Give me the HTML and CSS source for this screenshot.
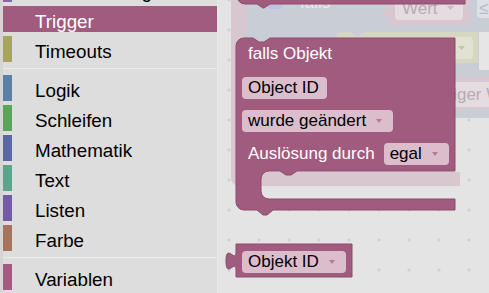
FILE: index.html
```html
<!DOCTYPE html>
<html lang="de">
<head>
    <meta charset="UTF-8">
    <meta name="viewport" content="width=device-width, initial-scale=1.0">
    <title>Skript-Editor</title>
    <link rel="stylesheet" href="styles.css">
</head>
<body>
    <div class="editor">
        <div class="toolbox">
            <div class="category-list">
                <div class="category"><span class="category-color color-convert"></span><span class="category-label">Konvertierung</span></div>
                <div class="category selected"><span class="category-color color-trigger"></span><span class="category-label">Trigger</span></div>
                <div class="category"><span class="category-color color-timeouts"></span><span class="category-label">Timeouts</span></div>
                <div class="separator"></div>
                <div class="category"><span class="category-color color-logic"></span><span class="category-label">Logik</span></div>
                <div class="category"><span class="category-color color-loops"></span><span class="category-label">Schleifen</span></div>
                <div class="category"><span class="category-color color-math"></span><span class="category-label">Mathematik</span></div>
                <div class="category"><span class="category-color color-text"></span><span class="category-label">Text</span></div>
                <div class="category"><span class="category-color color-lists"></span><span class="category-label">Listen</span></div>
                <div class="category"><span class="category-color color-colour"></span><span class="category-label">Farbe</span></div>
                <div class="separator"></div>
                <div class="category"><span class="category-color color-variables"></span><span class="category-label">Variablen</span></div>
                <div class="category"><span class="category-color color-functions"></span></div>
            </div>
        </div>

        <div class="workspace">
            <!-- blocks behind the dragged ones, drawn faded -->
            <svg class="faded-blocks" width="271" height="293" viewBox="218 0 271 293">
                <path class="faded-trigger" d="M231,-10 H262 V172 H460 V186 H239 A8,8 0 0 1 231,178 Z"/>
                <path class="faded-logic" d="M246,-10 H500 V118 H254 A8,8 0 0 1 246,110 Z"/>
                <path class="faded-timeout" d="M335,40 A8,8 0 0 1 343,32 H350 l6,4 h3 l6,-4 H478 V63 H335 Z"/>
                <rect class="faded-timeout-field" x="440" y="37" width="33" height="22" rx="4"/>
                <polygon class="faded-timeout-arrow" points="458,46 465,46 461.5,50"/>
                <rect class="faded-empty" x="479" y="32" width="20" height="38"/>
                <path class="faded-trigger" d="M388,-10 H470 V25 H388 V17 c0,-6 -5,5 -5,-4.5 s5,1.5 5,-4.5 Z"/>
                <rect class="faded-trigger-field" x="395" y="-10" width="68" height="30" rx="4"/>
                <text class="faded-field-text" x="402" y="13.5">Wert</text>
                <polygon class="faded-trigger-arrow" points="447,6 454,6 450.5,10"/>
                <rect class="faded-logic-field" x="477" y="-10" width="24" height="28" rx="4"/>
                <text class="faded-logic-text" x="479" y="14">≤</text>
                <rect class="faded-trigger" x="395" y="77" width="110" height="32"/>
                <rect class="faded-trigger-field" x="400" y="82" width="110" height="25" rx="4"/>
                <text class="faded-field-text" x="405" y="99.5">vorheriger Wert</text>
                <rect class="faded-mutator" x="268" y="-4" width="14" height="13" rx="3"/>
                <text class="faded-label" x="300" y="7.5">falls</text>
                <path class="block-fill" d="M237,-10 H465 V4 H270 l-6,4 h-1 l-6,-4 H245 A8,8 0 0 1 237,-4 Z"/>
            </svg>

            <div class="block event-block">
                <svg class="block-shape" width="219" height="178" viewBox="0 0 219 178">
                    <path class="block-fill" d="M0,8 A8,8 0 0 1 8,0 H17 l6,4 h5 l6,-4 H219 V133 H61 l-6,4 h-5 l-6,-4 H33 A8,8 0 0 0 25,141 V153 A8,8 0 0 0 33,161 H219 V172 H37 l-6,5 h-4 l-6,-5 H8 A8,8 0 0 1 0,164 Z"/>
                </svg>
                <div class="block-row first-row"><span class="block-label">falls Objekt</span></div>
                <div class="block-row"><span class="field">Object ID</span></div>
                <div class="block-row"><span class="field dropdown">wurde geändert<i class="arrow"></i></span></div>
                <div class="block-row"><span class="block-label">Auslösung durch</span><span class="field dropdown field-inline">egal<i class="arrow"></i></span></div>
            </div>

            <div class="block value-block">
                <svg class="block-shape" width="116" height="33" viewBox="0 0 116 33">
                    <path class="block-fill" d="M0,0 H116 V33 H0 V26 c0,-12 -10,9.6 -10,-9 s10,3 10,-9 Z"/>
                </svg>
                <div class="block-row"><span class="field dropdown">Objekt ID<i class="arrow"></i></span></div>
            </div>
        </div>
    </div>
</body>
</html>
```

FILE: styles.css
```css
* {
    box-sizing: border-box;
}

html, body {
    margin: 0;
    padding: 0;
    height: 100%;
}

body {
    font-family: 'Liberation Sans', Arial, sans-serif;
    overflow: hidden;
}

.editor {
    display: flex;
    width: 489px;
    height: 293px;
    overflow: hidden;
}

/* toolbox */

.toolbox {
    flex: 0 0 218px;
    background-color: #dddddd;
    border-left: 3px solid #d5d5d5;
    border-right: 1px solid #e9e9e9;
    overflow: hidden;
}

.category-list {
    margin-top: -24px;
}

.category {
    display: flex;
    height: 26px;
    margin-bottom: 4px;
    font-size: 18.8px;
    color: #000000;
}

.category-color {
    width: 9px;
}

.category-label {
    margin-left: 23px;
    padding-top: 3px;
    line-height: 26px;
    white-space: nowrap;
}

.category.selected {
    background-color: #a15b7e;
    color: #ffffff;
}

.separator {
    height: 1px;
    margin: 6px 0;
    background-color: #ebebeb;
}

.color-convert { background-color: #8e63a8; }
.color-timeouts { background-color: #a5a55b; }
.color-logic { background-color: #5b80a5; }
.color-loops { background-color: #5ba55b; }
.color-math { background-color: #5b67a5; }
.color-text { background-color: #5ba58c; }
.color-lists { background-color: #745ba5; }
.color-colour { background-color: #a5745b; }
.color-variables { background-color: #a55b80; }
.color-functions { background-color: #995ba5; }

/* workspace */

.workspace {
    position: relative;
    flex: 1;
    overflow: hidden;
    background-color: #e4e4e4;
    background-image: radial-gradient(circle, #d0d0d0 0, #d0d0d0 1.3px, transparent 1.8px);
    background-size: 30px 30px;
    background-position: -4px -15px;
}

.faded-blocks {
    position: absolute;
    left: 0;
    top: 0;
    font-family: 'Liberation Sans', Arial, sans-serif;
    font-size: 17px;
}

.faded-trigger { fill: #d8c7cf; }
.faded-trigger-field { fill: #e5dce1; }
.faded-trigger-arrow { fill: #cfb7c3; }
.faded-logic { fill: #c9cdd6; }
.faded-logic-field { fill: #dfe0e6; }
.faded-logic-text { fill: #b5b9c4; }
.faded-timeout { fill: #d5d7c0; }
.faded-timeout-field { fill: #e1e2d3; }
.faded-timeout-arrow { fill: #c4c6a4; }
.faded-empty { fill: #e6e6e6; }
.faded-mutator { fill: #bec2e2; }
.faded-field-text { fill: #b8abb3; }
.faded-label { fill: #e9ebf0; }

.block-fill {
    fill: #a15b7e;
    stroke: #8b4c6b;
    stroke-width: 1;
}

/* blocks */

.block {
    position: absolute;
}

.block-shape {
    position: absolute;
    left: 0;
    top: 0;
    overflow: visible;
}

.event-block {
    left: 18px;
    top: 38px;
    width: 219px;
    height: 172px;
    padding: 5px 0 0 6px;
}

.value-block {
    left: 18px;
    top: 244px;
    width: 116px;
    height: 33px;
    padding: 7px 0 0 6px;
}

.block-row {
    position: relative;
    display: flex;
    align-items: center;
    height: 22px;
    margin-bottom: 11px;
    font-size: 17px;
    white-space: nowrap;
}

.block-row.first-row {
    margin-bottom: 12px;
}

.block-label {
    padding-left: 6px;
    color: #ffffff;
}

.field {
    display: flex;
    align-items: center;
    height: 22px;
    padding: 0 8px 0 6px;
    background-color: #dbbdcc;
    border-radius: 4px;
    color: #000000;
}

.field.dropdown {
    padding-right: 11px;
}

.field-inline {
    margin-left: 9px;
}

.arrow {
    width: 0;
    height: 0;
    margin-left: 10px;
    border-left: 3.5px solid transparent;
    border-right: 3.5px solid transparent;
    border-top: 4px solid #b57b98;
}
```
